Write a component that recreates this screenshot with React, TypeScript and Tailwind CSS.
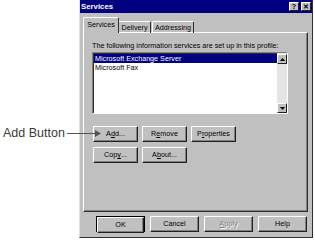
import React from "react";

const btn =
  "flex items-center justify-center h-[16px] bg-[#c0c0c0] border border-t-white border-l-white border-r-[#202020] border-b-[#202020] shadow-[inset_-1px_-1px_0_#808080] text-[7.2px] leading-none text-black";

const Btn = ({ children, w = "w-[45px]" }: { children: React.ReactNode; w?: string }) => (
  <div className={`${btn} ${w}`}>{children}</div>
);

const TitleBtn = ({ children }: { children: React.ReactNode }) => (
  <div className="flex h-[9px] w-[10px] items-center justify-center border border-t-white border-l-white border-r-[#202020] border-b-[#202020] bg-[#c0c0c0] text-[7px] font-bold leading-none text-black">
    {children}
  </div>
);

const ScrollBtn = ({ up }: { up?: boolean }) => (
  <div className="flex h-[10px] w-[10px] items-center justify-center border border-t-white border-l-white border-r-[#202020] border-b-[#202020] bg-[#c0c0c0]">
    <svg width="5" height="3" viewBox="0 0 5 3">
      {up ? <polygon points="2.5,0 5,3 0,3" fill="#000" /> : <polygon points="0,0 5,0 2.5,3" fill="#000" />}
    </svg>
  </div>
);

export default function App() {
  return (
    <div className="relative flex h-[240px] w-[315px] bg-white font-['Liberation_Sans',Arial,sans-serif]">
      {/* callout label */}
      <div className="flex w-[79px] flex-col pl-[3px] pt-[125px]">
        <span className="text-[12.5px] leading-[16px] text-[#3a3a3a]">Add Button</span>
      </div>
      <div className="absolute left-[67px] top-[133px] h-[1px] w-[29px] bg-[#555]" />
      <svg className="absolute left-[95px] top-[130px]" width="6" height="7" viewBox="0 0 6 7">
        <polygon points="0,0 6,3.5 0,7" fill="#555" />
      </svg>

      {/* dialog window */}
      <div className="flex h-[238px] w-[234px] flex-col border-l border-r border-b border-l-[#dfdfdf] border-r-[#303030] border-b-[#303030] bg-[#c0c0c0]">
        <div className="flex h-[13px] items-center justify-between bg-[#000080] pl-[1px] pr-[1px]">
          <span className="text-[7.8px] font-bold leading-none text-white">Services</span>
          <div className="flex gap-[2px]">
            <TitleBtn>?</TitleBtn>
            <TitleBtn>✕</TitleBtn>
          </div>
        </div>

        {/* tabs */}
        <div className="relative z-10 -mb-[1px] flex h-[20px] items-end pl-[3px] pt-[4px]">
          <div className="flex h-[16px] w-[36px] items-start justify-center rounded-tl-[2px] rounded-tr-[2px] border-l border-t border-r border-l-white border-t-white border-r-[#303030] bg-[#c0c0c0] pt-[3px] text-[7.2px] leading-none text-black">
            Services
          </div>
          <div className="flex h-[12px] w-[32px] items-start justify-center rounded-tr-[2px] border-t border-r border-t-white border-r-[#303030] pt-[2px] text-[7.2px] leading-none text-black">
            Delivery
          </div>
          <div className="ml-[1px] flex h-[12px] w-[42px] items-start justify-center rounded-tl-[2px] rounded-tr-[2px] border-l border-t border-r border-l-white border-t-white border-r-[#303030] pt-[2px] text-[7.2px] leading-none text-black">
            Addressing
          </div>
        </div>

        {/* tab panel */}
        <div className="ml-[3px] flex h-[180px] w-[225px] flex-col border border-t-white border-l-white border-r-[#303030] border-b-[#303030] pl-[8px] pt-[8px] shadow-[inset_-1px_-1px_0_#808080]">
          <p className="text-[7.2px] leading-[9px] text-black">
            The following information services are set up in this profile:
          </p>
          <div className="mt-[2px] flex h-[62px] w-[196px] border border-t-[#808080] border-l-[#808080] border-r-white border-b-white bg-white shadow-[inset_1px_1px_0_#303030]">
            <div className="flex flex-1 flex-col pl-[1px] pt-[1px]">
              <div className="h-[9px] bg-[#000080] pl-[1px] text-[7.2px] leading-[9px] text-white">
                Microsoft Exchange Server
              </div>
              <div className="h-[9px] pl-[1px] text-[7.2px] leading-[9px] text-black">Microsoft Fax</div>
            </div>
            <div className="flex w-[10px] flex-col justify-between bg-[#e4e4e4] pt-[1px]">
              <ScrollBtn up />
              <ScrollBtn />
            </div>
          </div>

          <div className="ml-[1px] mt-[12px] flex gap-[4px]">
            <Btn>
              A<u>d</u>d...
            </Btn>
            <Btn>
              R<u>e</u>move
            </Btn>
            <Btn>
              P<u>r</u>operties
            </Btn>
          </div>
          <div className="ml-[1px] mt-[5px] flex gap-[4px]">
            <Btn>
              Cop<u>y</u>...
            </Btn>
            <Btn>
              A<u>b</u>out...
            </Btn>
          </div>
        </div>

        {/* bottom buttons */}
        <div className="mt-[4px] flex justify-end gap-[5px] pr-[5px]">
          <div className="h-[16px] w-[49px] border border-black">
            <div className={`${btn} h-[14px] w-[47px]`}>OK</div>
          </div>
          <Btn w="w-[49px]">Cancel</Btn>
          <Btn w="w-[49px]">
            <span className="text-[#808080] [text-shadow:1px_1px_0_#fff]">
              <u>A</u>pply
            </span>
          </Btn>
          <Btn w="w-[49px]">Help</Btn>
        </div>
      </div>
    </div>
  );
}
